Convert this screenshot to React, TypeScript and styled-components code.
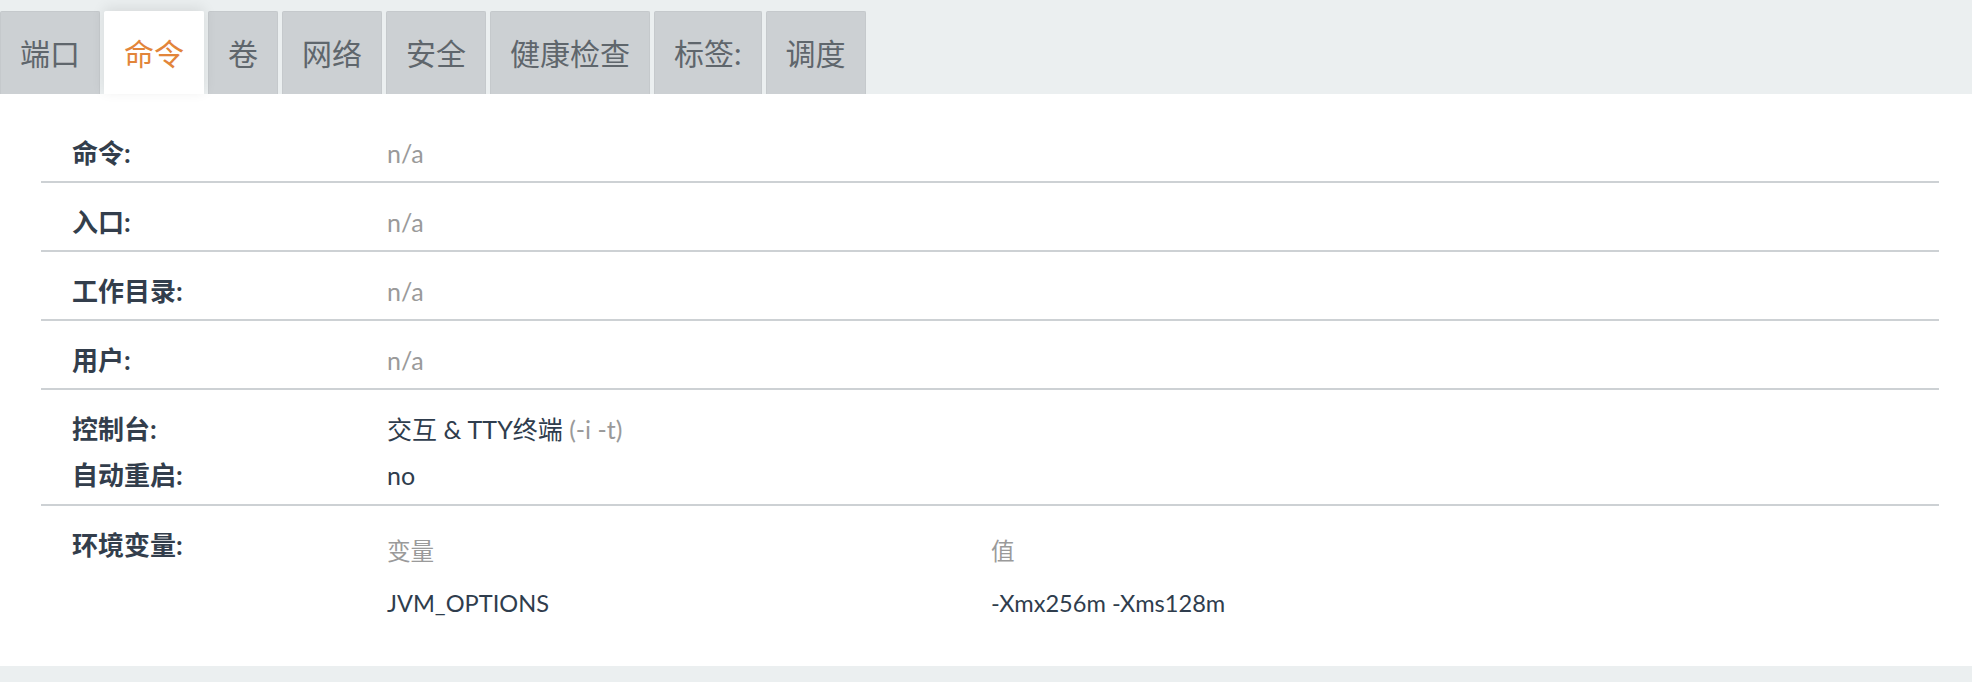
import React from "react";
import styled, { createGlobalStyle } from "styled-components";

const Global = createGlobalStyle`
  html, body { margin: 0; padding: 0; background: #ebeff0; }
  body { font-family: Lato, "Noto Sans CJK SC", sans-serif; }
  * { box-sizing: border-box; }
`;

const Page = styled.div`
  display: flex;
  flex-direction: column;
  width: 1972px;
  height: 682px;
  background: #ebeff0;
`;

const TabBar = styled.div`
  display: flex;
  align-items: flex-end;
  gap: 4px;
  height: 94px;
  padding-top: 11px;
`;

const Tab = styled.div<{ $active?: boolean }>`
  height: 83px;
  display: flex;
  align-items: center;
  padding: 0 19px;
  font-size: 30px;
  line-height: 1;
  color: ${(p) => (p.$active ? "#e2853a" : "#5f666c")};
  background: ${(p) => (p.$active ? "#ffffff" : "#ccd0d3")};
  border: 1px solid ${(p) => (p.$active ? "#ffffff" : "#c5c9cc")};
  border-bottom: none;
  border-radius: 2px 2px 0 0;
  box-shadow: ${(p) => (p.$active ? "0 -3px 14px rgba(0,0,0,0.09)" : "none")};
  position: relative;
  z-index: ${(p) => (p.$active ? 1 : 0)};
`;

const Panel = styled.div`
  background: #ffffff;
  padding: 20px 33px 25px 41px;
  height: 572px;
`;

const Row = styled.div<{ $last?: boolean; $multi?: boolean }>`
  display: grid;
  grid-template-columns: 315px 1fr;
  padding: 21px 0 ${(p) => (p.$multi ? "11px" : "10px")} 31px;
  border-bottom: ${(p) => (p.$last ? "none" : "2px solid #cdd1d4")};
`;

const Labels = styled.div`
  display: flex;
  flex-direction: column;
  gap: 10px;
`;

const Label = styled.div`
  font-size: 26px;
  line-height: 36px;
  font-weight: 700;
  color: #333e4c;
`;

const Values = styled.div`
  display: flex;
  flex-direction: column;
  gap: 10px;
`;

const Value = styled.div<{ $muted?: boolean }>`
  font-size: 25px;
  line-height: 36px;
  color: ${(p) => (p.$muted ? "#9a9a9a" : "#2f3d4d")};
`;

const Muted = styled.span`
  color: #9a9a9a;
`;

const EnvTable = styled.div`
  display: grid;
  grid-template-columns: 604px 1fr;
  margin-top: -2px;
`;

const EnvHead = styled.div`
  font-size: 23.6px;
  line-height: 36px;
  padding: 8px 0;
  color: #9a9a9a;
`;

const EnvCell = styled.div`
  font-size: 23.6px;
  line-height: 36px;
  padding: 8px 0;
  color: #2f3d4d;
`;

const tabs = ["端口", "命令", "卷", "网络", "安全", "健康检查", "标签:", "调度"];

export default function App() {
  return (
    <Page>
      <Global />
      <TabBar>
        {tabs.map((t) => (
          <Tab key={t} $active={t === "命令"}>
            {t}
          </Tab>
        ))}
      </TabBar>
      <Panel>
        <Row>
          <Label>命令:</Label>
          <Value $muted>n/a</Value>
        </Row>
        <Row>
          <Label>入口:</Label>
          <Value $muted>n/a</Value>
        </Row>
        <Row>
          <Label>工作目录:</Label>
          <Value $muted>n/a</Value>
        </Row>
        <Row>
          <Label>用户:</Label>
          <Value $muted>n/a</Value>
        </Row>
        <Row $multi>
          <Labels>
            <Label>控制台:</Label>
            <Label>自动重启:</Label>
          </Labels>
          <Values>
            <Value>
              交互 &amp; TTY终端 <Muted>(-i -t)</Muted>
            </Value>
            <Value>no</Value>
          </Values>
        </Row>
        <Row $last>
          <Label>环境变量:</Label>
          <EnvTable>
            <EnvHead>变量</EnvHead>
            <EnvHead>值</EnvHead>
            <EnvCell>JVM_OPTIONS</EnvCell>
            <EnvCell>-Xmx256m -Xms128m</EnvCell>
          </EnvTable>
        </Row>
      </Panel>
    </Page>
  );
}
